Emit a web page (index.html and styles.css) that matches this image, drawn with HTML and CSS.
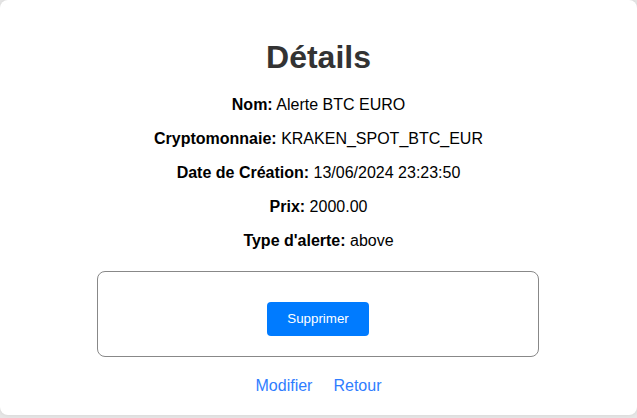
FILE: index.html
```html
<!DOCTYPE html>
<html lang="fr">
<head>
<meta charset="utf-8">
<title>Détails</title>
<link rel="stylesheet" href="styles.css">
</head>
<body>
<div class="card">
  <h1 class="title">Détails</h1>
  <p class="row"><strong>Nom:</strong> Alerte BTC EURO</p>
  <p class="row"><strong>Cryptomonnaie:</strong> KRAKEN_SPOT_BTC_EUR</p>
  <p class="row"><strong>Date de Création:</strong> 13/06/2024 23:23:50</p>
  <p class="row"><strong>Prix:</strong> 2000.00</p>
  <p class="row"><strong>Type d'alerte:</strong> above</p>
  <form class="delete-form">
    <button type="button" class="btn-delete">Supprimer</button>
  </form>
  <div class="links">
    <a href="#" class="link">Modifier</a>
    <a href="#" class="link">Retour</a>
  </div>
</div>
</body>
</html>
```
FILE: styles.css
```css
html, body {
  margin: 0;
  padding: 0;
}
body {
  background: #e6e6e6;
  font-family: "Liberation Sans", Arial, sans-serif;
  height: 418px;
  overflow: hidden;
}
.card {
  background: #fff;
  border-radius: 8px;
  padding: 18px 20px 20px;
  box-shadow: 0 0 4px rgba(0, 0, 0, 0.08);
  text-align: center;
}
.title {
  font-size: 32px;
  color: #333;
  margin: 21px 0 20px;
}
.row {
  font-size: 16px;
  color: #000;
  margin: 16px 0;
}
.delete-form {
  margin: 21px 78px 0 77px;
  border: 1px solid #888;
  border-radius: 8px;
  padding: 20px;
}
.btn-delete {
  margin-top: 10px;
  background: #007bff;
  color: #fff;
  border: none;
  border-radius: 4px;
  font-family: "Liberation Sans", Arial, sans-serif;
  font-size: 13.333px;
  line-height: 14px;
  padding: 10px 20px;
}
.links {
  margin-top: 20px;
  display: flex;
  justify-content: center;
  gap: 21px;
  font-size: 16px;
}
.link {
  color: #2f7dff;
  text-decoration: none;
}
```
